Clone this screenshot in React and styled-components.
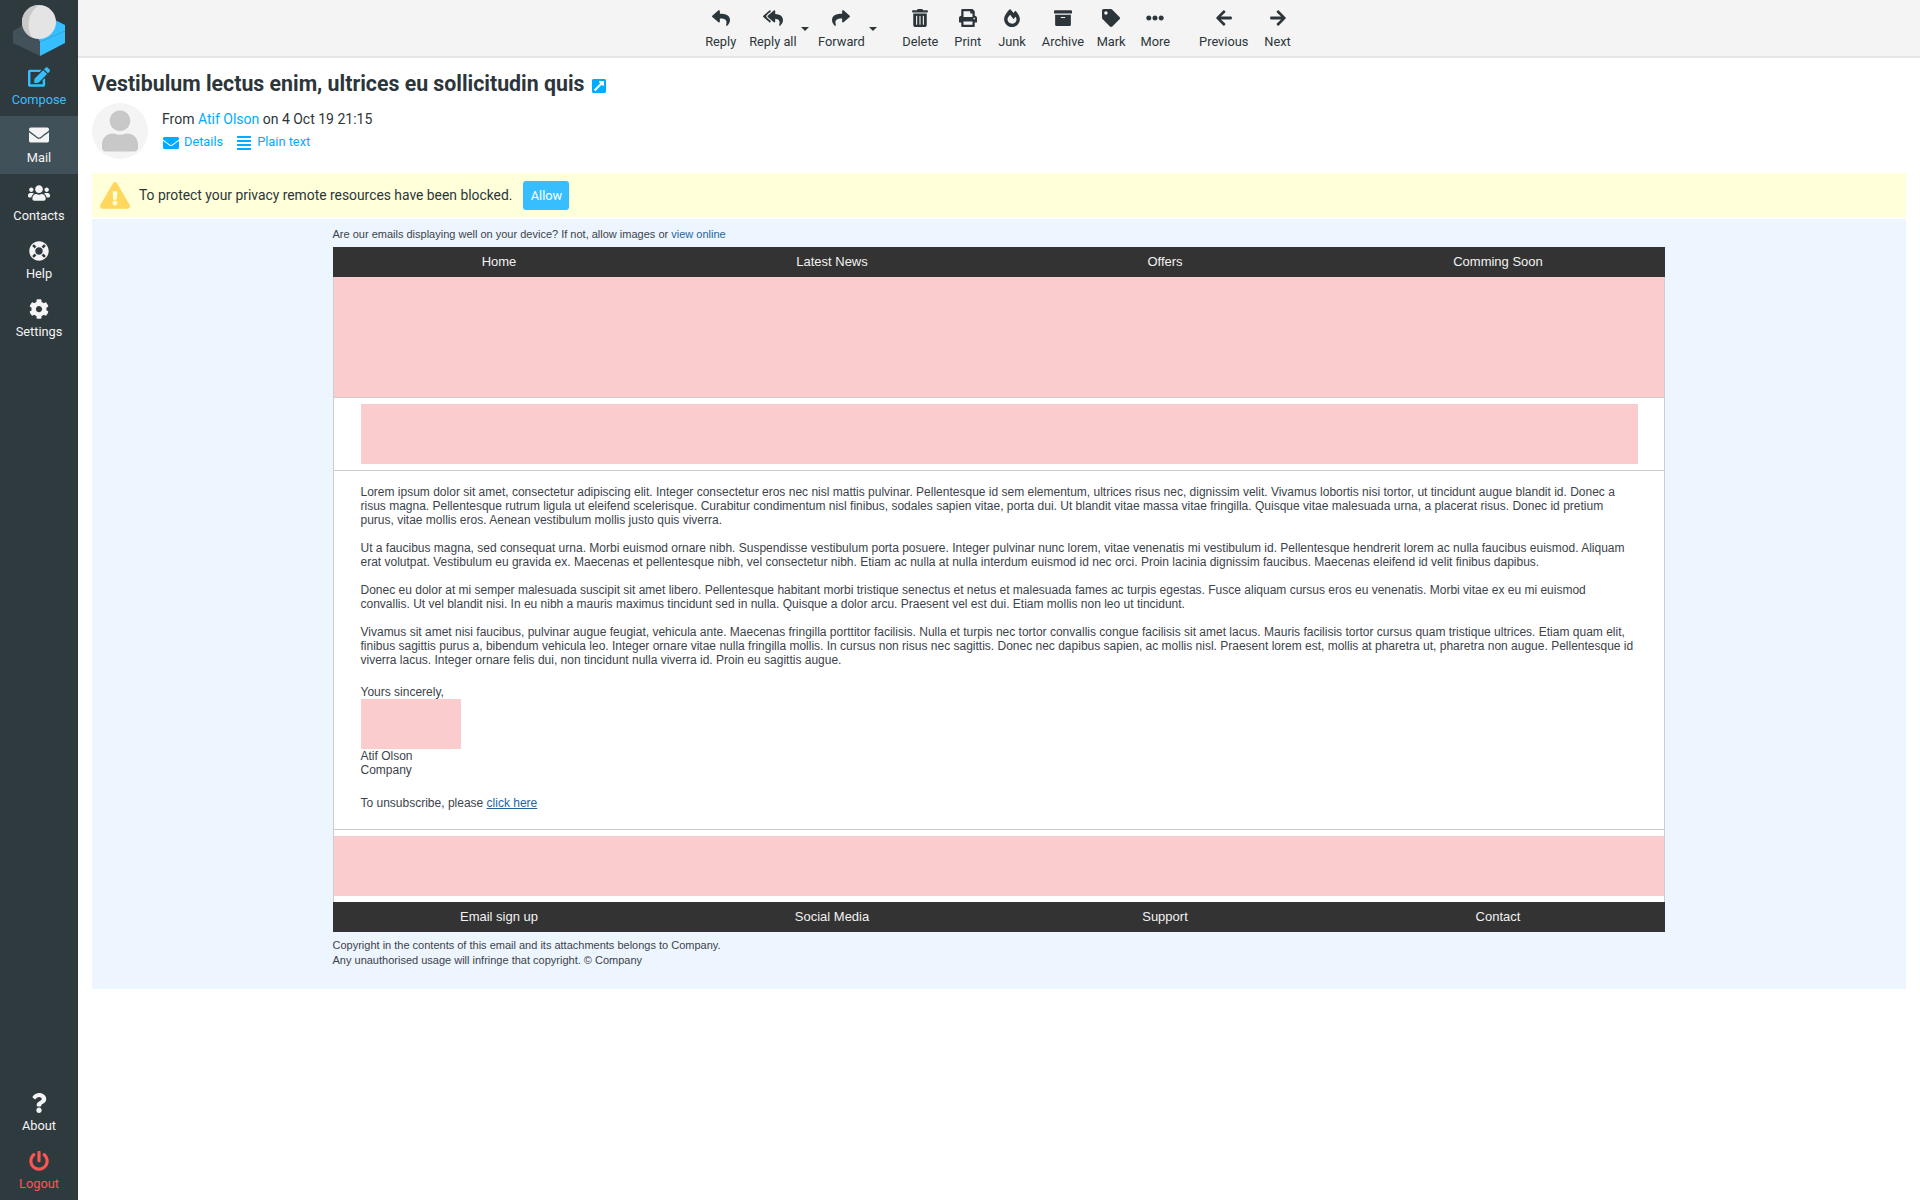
import React from 'react';
import styled, { createGlobalStyle } from 'styled-components';
import {
  FaEdit, FaEnvelope, FaUsers, FaLifeRing, FaCog, FaQuestion, FaPowerOff,
  FaReply, FaReplyAll, FaShare, FaTrashAlt, FaPrint, FaFireAlt, FaArchive, FaTag,
  FaEllipsisH, FaArrowLeft, FaArrowRight, FaUser, FaExternalLinkSquareAlt,
  FaExclamationTriangle, FaAlignJustify,
} from 'react-icons/fa';

const Global = createGlobalStyle`
  html, body { margin: 0; padding: 0; height: 100%; background: #fff; }
  body { font-family: Roboto, "Liberation Sans", sans-serif; color: #2c363a; overflow: hidden; }
  * { box-sizing: border-box; }
`;

const Shell = styled.div`
  display: flex;
  width: 1920px;
  height: 1200px;
`;

const Sidebar = styled.nav`
  width: 78px;
  flex: none;
  background: #2f3a3f;
  display: flex;
  flex-direction: column;
`;

const LogoWrap = styled.div`
  height: 58px;
  padding-left: 13px;
  display: flex;
  align-items: flex-start;
`;

const NavItem = styled.a`
  height: 58px;
  display: flex;
  flex-direction: column;
  align-items: center;
  justify-content: flex-start;
  padding-top: 9px;
  font-size: 12.8px;
  line-height: 16px;
  color: ${p => p.$color || '#f4f4f4'};
  background: ${p => (p.$active ? '#41515a' : 'transparent')};
  svg { height: 20px; width: 22px; margin-bottom: 5px; display: block; }
`;

const SideSpacer = styled.div`
  flex: 1;
`;

const Main = styled.main`
  flex: 1;
  min-width: 0;
  display: flex;
  flex-direction: column;
`;

const Toolbar = styled.header`
  height: 58px;
  flex: none;
  background: #f4f4f4;
  border-bottom: 2px solid #e3e5e6;
  display: flex;
  justify-content: center;
  padding-right: 2px;
`;

const ToolButton = styled.a`
  position: relative;
  display: flex;
  flex-direction: column;
  align-items: center;
  padding-top: 9px;
  margin-left: ${p => p.$gap || 0}px;
  font-size: 12.8px;
  line-height: 16px;
  color: #2c363a;
  svg { height: 18px; width: 20px; margin-bottom: 7px; display: block; }
`;

const Caret = styled.span`
  width: 0;
  height: 0;
  margin: 27px 0 0 4px;
  border-left: 4px solid transparent;
  border-right: 4px solid transparent;
  border-top: 4px solid #2c363a;
`;

const ToolGroup = styled.div`
  display: flex;
`;

const Content = styled.div`
  padding: 0 14px;
`;

const Title = styled.h1`
  margin: 12px 0 0;
  font-size: 21.3px;
  line-height: 28px;
  font-weight: 700;
  display: flex;
  align-items: center;
  color: #2c363a;
  svg { margin-left: 7px; width: 16px; height: 16px; color: #00acff; margin-top: 3px; }
`;

const Meta = styled.div`
  display: flex;
  margin-top: 5px;
  height: 56px;
`;

const Avatar = styled.div`
  width: 56px;
  height: 56px;
  border-radius: 50%;
  background: #f4f4f4;
  color: #c8c8c8;
  display: flex;
  align-items: center;
  justify-content: center;
  svg { width: 36px; height: 42px; }
`;

const MetaText = styled.div`
  margin-left: 14px;
  padding-top: 6px;
  font-size: 14px;
  line-height: 20px;
`;

const Link = styled.a`
  color: #00acff;
`;

const MetaLinks = styled.div`
  display: flex;
  gap: 12px;
  margin-top: 3px;
  font-size: 12.8px;
  line-height: 20px;
`;

const MetaLink = styled.a`
  display: flex;
  align-items: center;
  color: #00acff;
  svg { width: 16px; height: 16px; margin-left: 1px; margin-right: 5px; position: relative; top: 1px; }
`;

const Notice = styled.div`
  margin-top: 14px;
  height: 44px;
  background: #ffffd9;
  display: flex;
  align-items: center;
  padding-left: 8px;
  font-size: 13.86px;
  svg { width: 30px; height: 27px; color: #ffd65e; margin-right: 9px; }
`;

const AllowButton = styled.button`
  margin-left: 11px;
  height: 29px;
  width: 46px;
  padding: 0;
  border: 0;
  border-radius: 3px;
  background: #37beff;
  color: #fff;
  font: 12.8px Roboto, sans-serif;
`;

const MailBody = styled.section`
  margin-top: 2px;
  height: 770px;
  background: #edf5fe;
  padding-top: 8px;
  display: flex;
  justify-content: center;
  font-family: "Liberation Sans", Arial, sans-serif;
  color: #3c434a;
`;

const Column = styled.div`
  width: 1332px;
  margin-left: -1px;
`;

const Small = styled.div`
  font-size: 11px;
  line-height: 15px;
`;

const Preheader = styled(Small)`
  height: 20px;
`;

const MailLink = styled.a`
  color: #24649f;
  text-decoration: ${p => (p.$under ? 'underline' : 'none')};
`;

const MailNav = styled.div`
  height: 30px;
  padding-bottom: 2px;
  background: #333;
  display: grid;
  grid-template-columns: repeat(4, 1fr);
  align-items: center;
  text-align: center;
  color: #f2f2f2;
  font-size: 13px;
`;

const Frame = styled.div`
  background: #fff;
  border-left: 1px solid #ccc;
  border-right: 1px solid #ccc;
`;

const Hero = styled.div`
  height: 120px;
  background: #fbcccd;
`;

const Band = styled.div`
  border-top: 1px solid #ccc;
  padding: ${p => p.$pad || '6px 0'};
`;

const Banner = styled.div`
  height: 60px;
  background: #fbcccd;
`;

const Letter = styled.div`
  border-top: 1px solid #ccc;
  padding: 14px 26px 19px 27px;
  font-size: 12px;
  line-height: 14px;
`;

const Para = styled.p`
  margin: 0 0 ${p => p.$after ?? 14}px;
`;

const Signature = styled.div`
  width: 100px;
  height: 50px;
  background: #fbcccd;
`;

const Copy = styled(Small)`
  margin-top: 6px;
`;

const sideTop = [
  { label: 'Compose', icon: <FaEdit />, color: '#37beff' },
  { label: 'Mail', icon: <FaEnvelope />, active: true },
  { label: 'Contacts', icon: <FaUsers /> },
  { label: 'Help', icon: <FaLifeRing /> },
  { label: 'Settings', icon: <FaCog /> },
];

const tools = [
  { label: 'Reply', icon: <FaReply />, gap: 0 },
  { label: 'Reply all', icon: <FaReplyAll />, gap: 13, caret: true },
  { label: 'Forward', icon: <FaShare />, gap: 9.5, caret: true },
  { label: 'Delete', icon: <FaTrashAlt />, gap: 25.5 },
  { label: 'Print', icon: <FaPrint />, gap: 16 },
  { label: 'Junk', icon: <FaFireAlt />, gap: 17 },
  { label: 'Archive', icon: <FaArchive />, gap: 16 },
  { label: 'Mark', icon: <FaTag />, gap: 12.5 },
  { label: 'More', icon: <FaEllipsisH />, gap: 15 },
  { label: 'Previous', icon: <FaArrowLeft />, gap: 29 },
  { label: 'Next', icon: <FaArrowRight />, gap: 16 },
];

const Logo = () => (
  <svg width="56" height="58" viewBox="0 0 56 58">
    <path d="M0 31 L27 42 V56 L0 43 Z" fill="#43525a" />
    <path d="M27 42 L52 31 V43 L27 56 Z" fill="#37beff" />
    <path d="M38 18 L52 25 V31 L27 42 L20 30 Z" fill="#37beff" />
    <path d="M0 31 L12 24 L27 42 Z" fill="#43525a" />
    <circle cx="26" cy="22" r="17" fill="#e4e4e4" />
    <path d="M26 5 A17 17 0 0 0 19 37.5 A24 24 0 0 1 26 5 Z" fill="#c9c9c9" />
  </svg>
);

export default function App() {
  return (
    <Shell>
      <Global />
      <Sidebar>
        <LogoWrap><Logo /></LogoWrap>
        {sideTop.map(i => (
          <NavItem key={i.label} $color={i.color} $active={i.active}>{i.icon}{i.label}</NavItem>
        ))}
        <SideSpacer />
        <NavItem><FaQuestion />About</NavItem>
        <NavItem $color="#ff5552"><FaPowerOff />Logout</NavItem>
      </Sidebar>
      <Main>
        <Toolbar>
          {tools.map(t => (
            <ToolGroup key={t.label}>
              <ToolButton $gap={t.gap}>{t.icon}{t.label}</ToolButton>
              {t.caret && <Caret />}
            </ToolGroup>
          ))}
        </Toolbar>
        <Content>
          <Title>Vestibulum lectus enim, ultrices eu sollicitudin quis <FaExternalLinkSquareAlt /></Title>
          <Meta>
            <Avatar><FaUser /></Avatar>
            <MetaText>
              From <Link>Atif Olson</Link> on 4 Oct 19 21:15
              <MetaLinks>
                <MetaLink><FaEnvelope />Details</MetaLink>
                <MetaLink><FaAlignJustify />Plain text</MetaLink>
              </MetaLinks>
            </MetaText>
          </Meta>
          <Notice>
            <FaExclamationTriangle />
            To protect your privacy remote resources have been blocked.
            <AllowButton>Allow</AllowButton>
          </Notice>
          <MailBody>
            <Column>
              <Preheader>Are our emails displaying well on your device? If not, allow images or <MailLink>view online</MailLink></Preheader>
              <MailNav><span>Home</span><span>Latest News</span><span>Offers</span><span>Comming Soon</span></MailNav>
              <Frame>
                <Hero />
                <Band $pad="6px 26px 6px 27px"><Banner /></Band>
                <Letter>
                  <Para>Lorem ipsum dolor sit amet, consectetur adipiscing elit. Integer consectetur eros nec nisl mattis pulvinar. Pellentesque id sem elementum, ultrices risus nec, dignissim velit. Vivamus lobortis nisi tortor, ut tincidunt augue blandit id. Donec a risus magna. Pellentesque rutrum ligula ut eleifend scelerisque. Curabitur condimentum nisl finibus, sodales sapien vitae, porta dui. Ut blandit vitae massa vitae fringilla. Quisque vitae malesuada urna, a placerat risus. Donec id pretium purus, vitae mollis eros. Aenean vestibulum mollis justo quis viverra.</Para>
                  <Para>Ut a faucibus magna, sed consequat urna. Morbi euismod ornare nibh. Suspendisse vestibulum porta posuere. Integer pulvinar nunc lorem, vitae venenatis mi vestibulum id. Pellentesque hendrerit lorem ac nulla faucibus euismod. Aliquam erat volutpat. Vestibulum eu gravida ex. Maecenas et pellentesque nibh, vel consectetur nibh. Etiam ac nulla at nulla interdum euismod id nec orci. Proin lacinia dignissim faucibus. Maecenas eleifend id velit finibus dapibus.</Para>
                  <Para>Donec eu dolor at mi semper malesuada suscipit sit amet libero. Pellentesque habitant morbi tristique senectus et netus et malesuada fames ac turpis egestas. Fusce aliquam cursus eros eu venenatis. Morbi vitae ex eu mi euismod convallis. Ut vel blandit nisi. In eu nibh a mauris maximus tincidunt sed in nulla. Quisque a dolor arcu. Praesent vel est dui. Etiam mollis non leo ut tincidunt.</Para>
                  <Para $after={18}>Vivamus sit amet nisi faucibus, pulvinar augue feugiat, vehicula ante. Maecenas fringilla porttitor facilisis. Nulla et turpis nec tortor convallis congue facilisis sit amet lacus. Mauris facilisis tortor cursus quam tristique ultrices. Etiam quam elit, finibus sagittis purus a, bibendum vehicula leo. Integer ornare vitae nulla fringilla mollis. In cursus non risus nec sagittis. Donec nec dapibus sapien, ac mollis nisl. Praesent lorem est, mollis at pharetra ut, pharetra non augue. Pellentesque id viverra lacus. Integer ornare felis dui, non tincidunt nulla viverra id. Proin eu sagittis augue.</Para>
                  <Para $after={0}>Yours sincerely,</Para>
                  <Signature />
                  <Para $after={19}>Atif Olson<br />Company</Para>
                  <Para $after={0}>To unsubscribe, please <MailLink $under>click here</MailLink></Para>
                </Letter>
                <Band><Banner /></Band>
              </Frame>
              <MailNav><span>Email sign up</span><span>Social Media</span><span>Support</span><span>Contact</span></MailNav>
              <Copy>Copyright in the contents of this email and its attachments belongs to Company.<br />Any unauthorised usage will infringe that copyright. © Company</Copy>
            </Column>
          </MailBody>
        </Content>
      </Main>
    </Shell>
  );
}
